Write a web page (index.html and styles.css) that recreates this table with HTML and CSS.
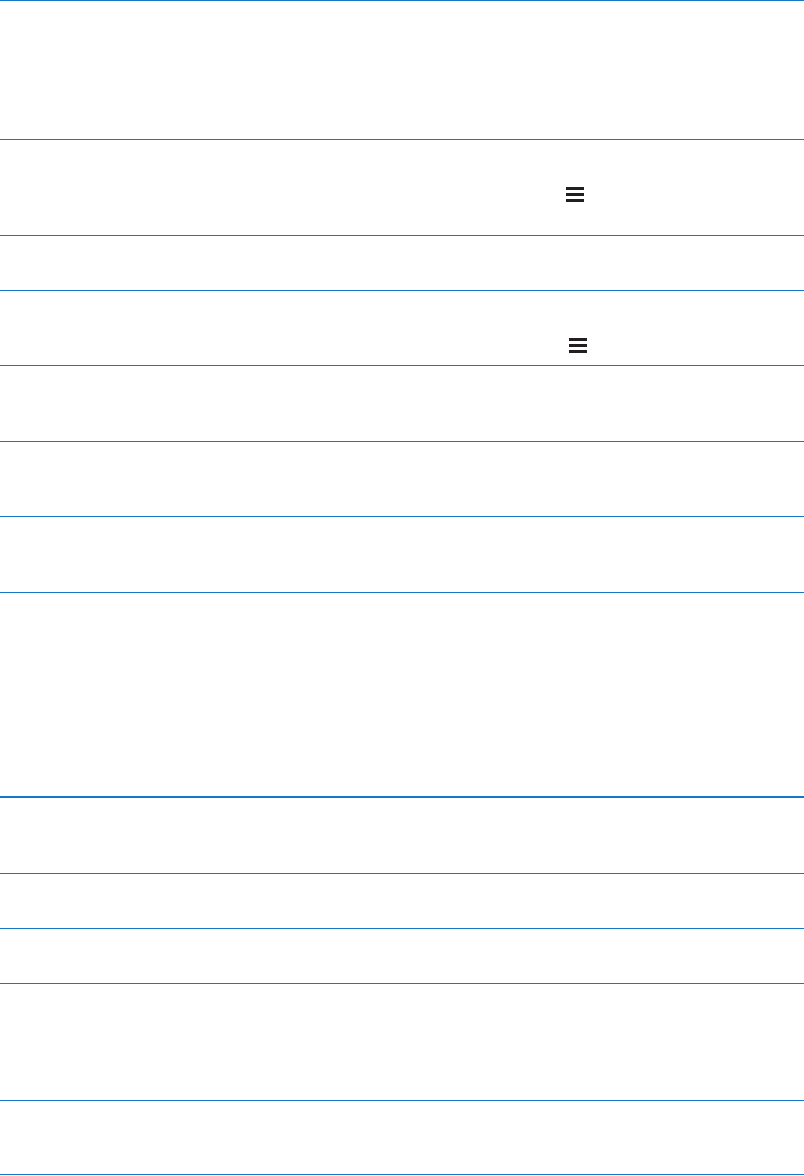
FILE: index.html
```html
<!DOCTYPE html>
<html lang="en">
<head>
<meta charset="utf-8">
<title>Table</title>
<link rel="stylesheet" href="styles.css">
</head>
<body>
<div class="table">
  <div class="row h139"></div>
  <div class="row h96">
    <div class="cell-left"></div>
    <div class="cell-right a566">
      <svg class="menu" width="18" height="15" viewBox="0 0 18 15" aria-hidden="true">
        <rect x="0" y="0" width="18" height="3"/>
        <rect x="0" y="6" width="18" height="3"/>
        <rect x="0" y="12" width="18" height="3"/>
      </svg>
    </div>
  </div>
  <div class="row h55"></div>
  <div class="row h75">
    <div class="cell-left"></div>
    <div class="cell-right a569">
      <svg class="menu" width="18" height="15" viewBox="0 0 18 15" aria-hidden="true">
        <rect x="0" y="0" width="18" height="3"/>
        <rect x="0" y="6" width="18" height="3"/>
        <rect x="0" y="12" width="18" height="3"/>
      </svg>
    </div>
  </div>
  <div class="row h76"></div>
  <div class="row h75"></div>
  <div class="row h76"></div>
  <div class="row h204"></div>
  <div class="row h77 thick"></div>
  <div class="row h55"></div>
  <div class="row h55"></div>
  <div class="row h117"></div>
  <div class="row h74 last"></div>
</div>
</body>
</html>
```

FILE: styles.css
```css
html, body {
  margin: 0;
  padding: 0;
  background: #ffffff;
  font-family: "Liberation Sans", Arial, sans-serif;
}

.table {
  width: 804px;
  display: flex;
  flex-direction: column;
}

.row {
  box-sizing: border-box;
  border-top: 1px solid #1677c9;
  display: flex;
  width: 804px;
}

.row.thick {
  border-top: 2px solid #1677c9;
}

.row.last {
  border-bottom: 1px solid #1677c9;
  height: 75px;
}

.cell-left {
  flex: 0 0 auto;
}

.cell-right {
  padding-top: 47px;
}

.a566 { padding-left: 566px; }
.a569 { padding-left: 569px; }

.menu {
  display: block;
  fill: #231f20;
}

.h139 { height: 139px; }
.h96 { height: 96px; }
.h55 { height: 55px; }
.h75 { height: 75px; }
.h76 { height: 76px; }
.h204 { height: 204px; }
.h77 { height: 77px; }
.h117 { height: 117px; }
.h74 { height: 74px; }
```
